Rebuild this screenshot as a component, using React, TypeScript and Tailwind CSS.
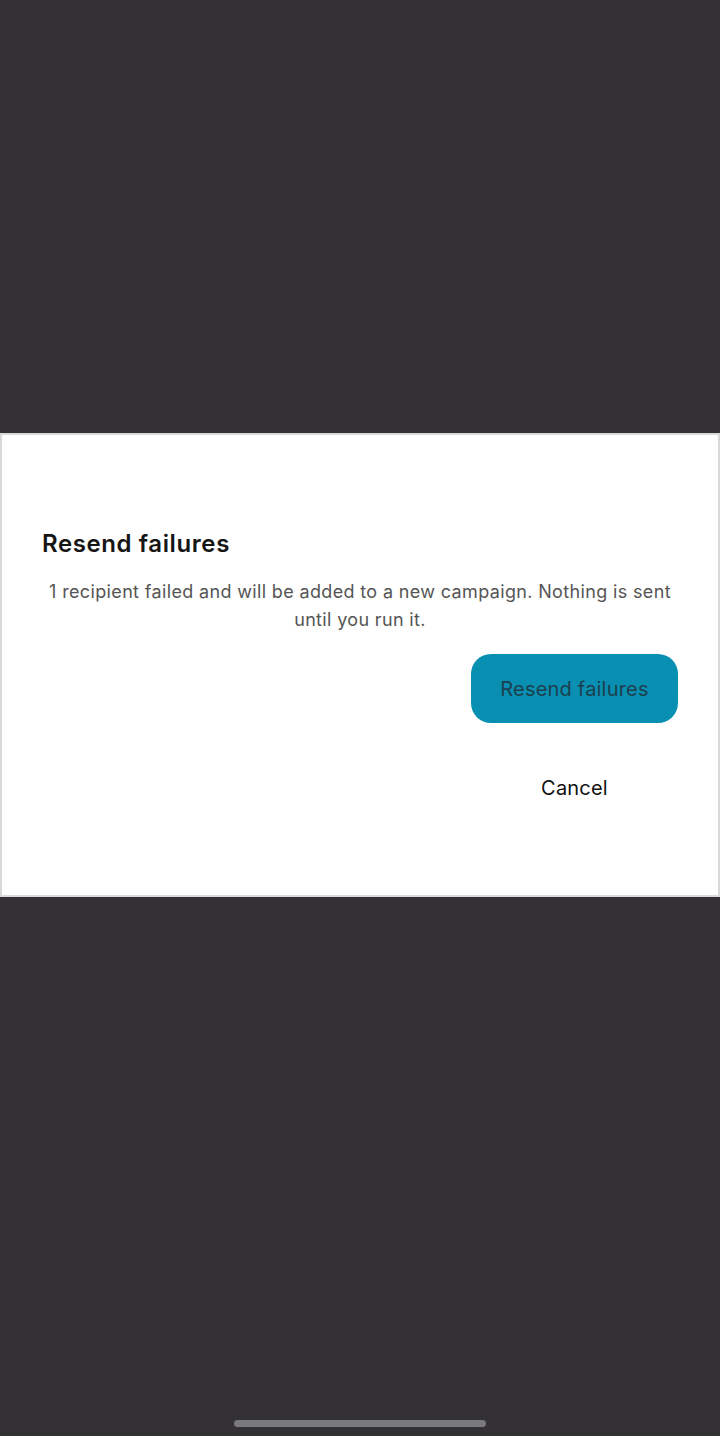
export default function App() {
  return (
    <div
      className="relative flex h-[1436px] w-[720px] flex-col bg-[#333134]"
      style={{ fontFamily: 'Inter, "Noto Sans", sans-serif' }}
    >
      <div className="h-[433px] shrink-0" />
      <div className="flex h-[464px] flex-col border-2 border-[#d9d9d9] bg-white px-[40px] pt-[95px]">
        <h2 className="text-[24px] leading-[28px] font-semibold tracking-[0.6px] text-[#151515]">Resend failures</h2>
        <p className="mt-[20px] text-center text-[18px] leading-[28px] tracking-[0.35px] text-[#555555]">
          1 recipient failed and will be added to a new campaign. Nothing is sent until you run it.
        </p>
        <div className="mt-[20px] flex flex-col items-end gap-[30px]">
          <button className="h-[69px] w-[207px] rounded-[20px] bg-[#088fb2] text-[20px] tracking-[0.2px] text-[#1d3f4d]">
            Resend failures
          </button>
          <button className="h-[69px] w-[207px] text-[20px] tracking-[0.2px] text-[#111111]">Cancel</button>
        </div>
      </div>
      <div className="absolute bottom-[9px] left-[234px] h-[7px] w-[252px] rounded-full bg-[#7a797b]" />
    </div>
  );
}
